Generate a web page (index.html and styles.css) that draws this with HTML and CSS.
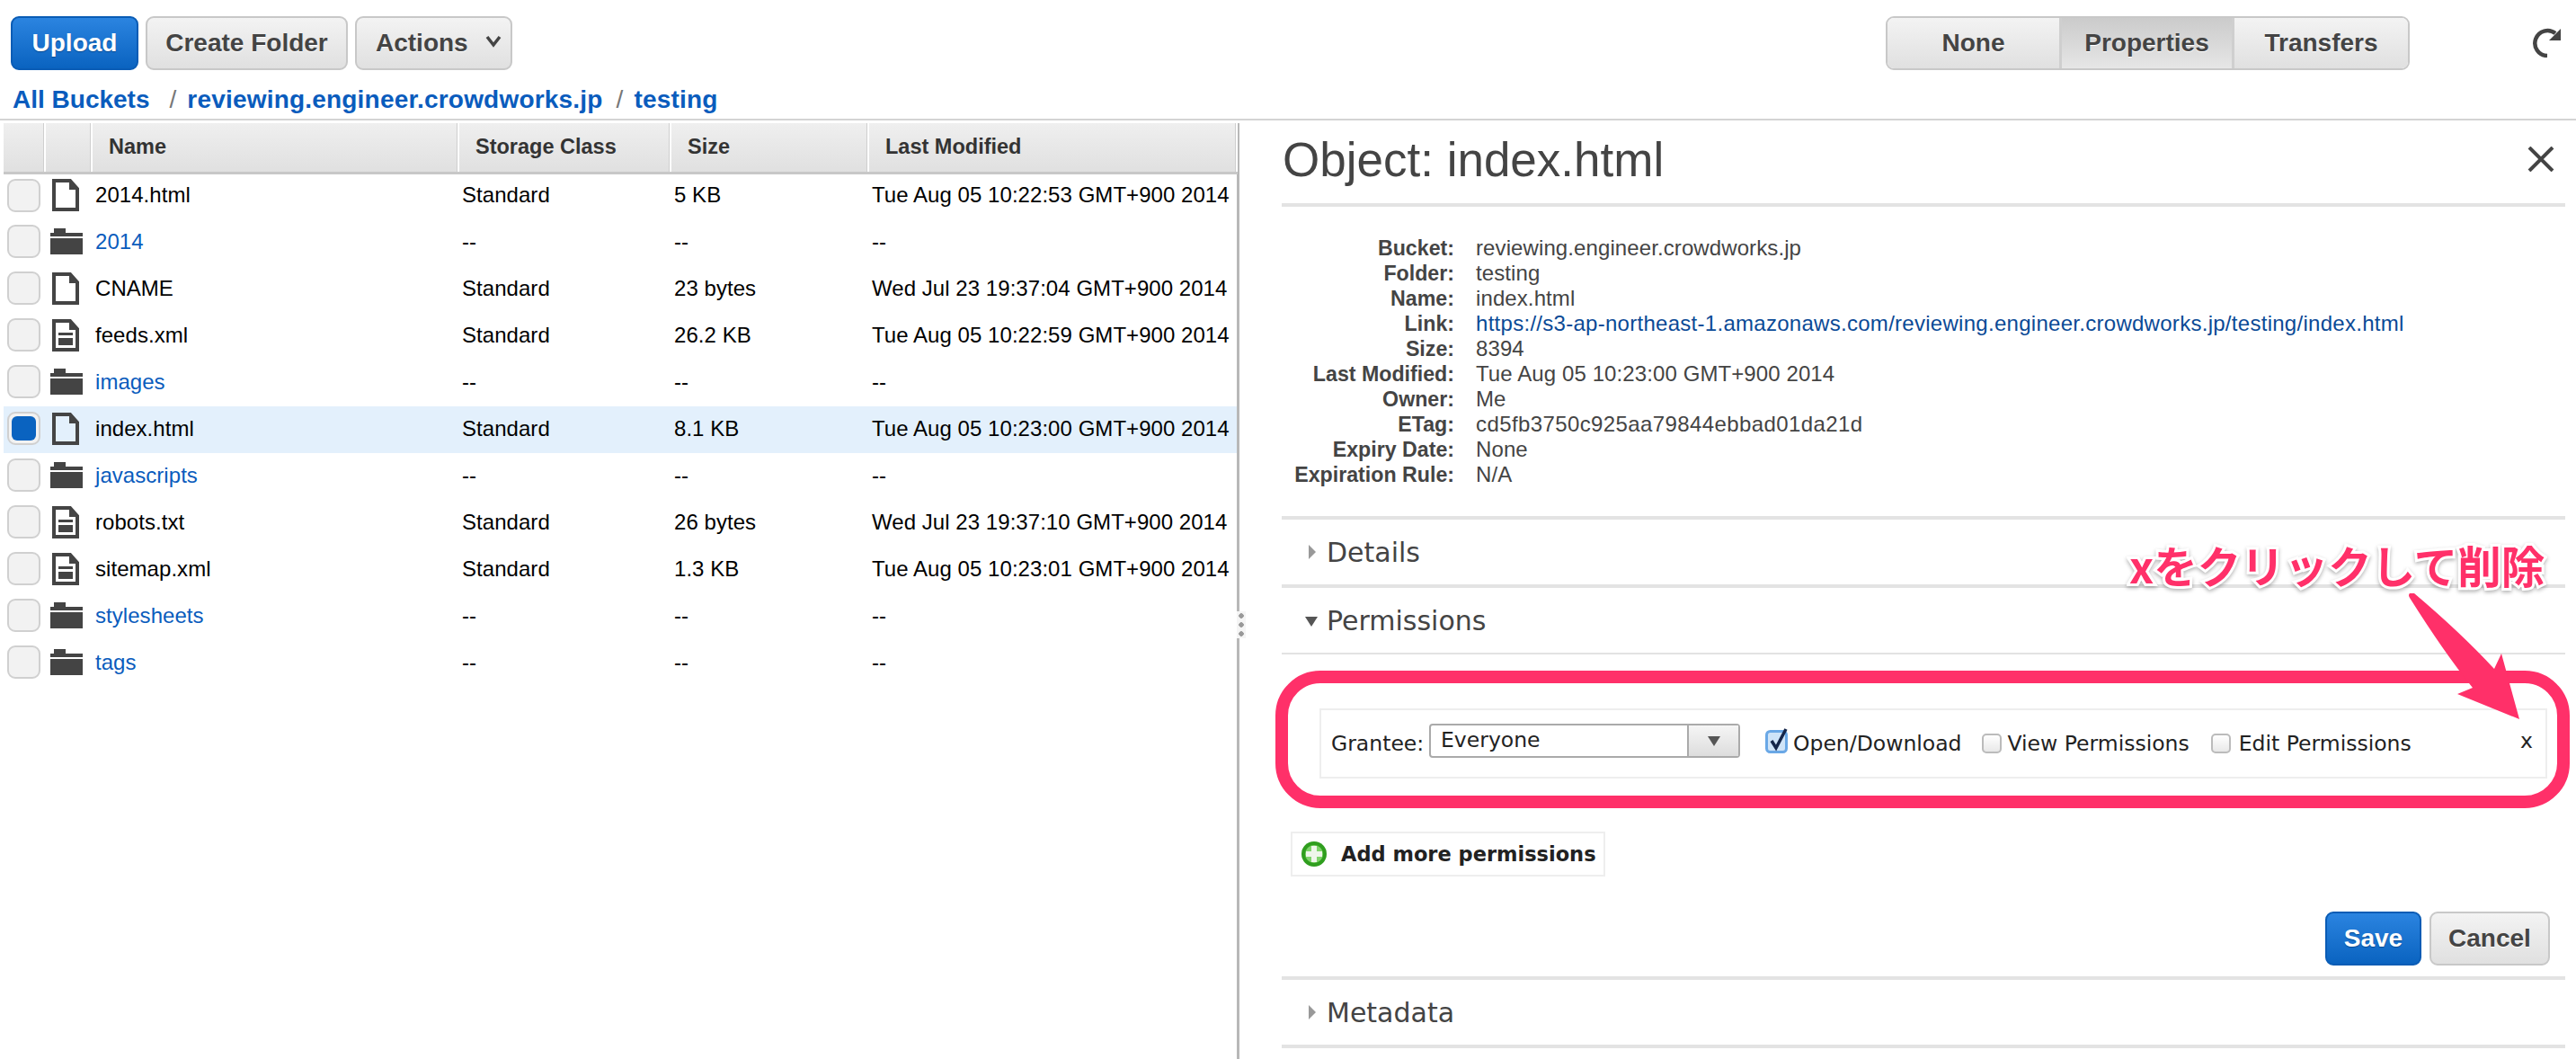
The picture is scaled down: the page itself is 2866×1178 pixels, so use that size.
FILE: index.html
```html
<!DOCTYPE html>
<html lang="ja">
<head>
    <meta charset="UTF-8">
    <meta name="viewport" content="width=device-width, initial-scale=1.0">
    <title>S3 Console - index.html</title>
    <link rel="stylesheet" href="styles.css">
</head>
<body>

    <svg class="icon-defs" width="0" height="0">
        <symbol id="icon-file" viewBox="0 0 30 36">
            <path d="M2 2H20L28 11V34H2Z" fill="none" stroke="#444" stroke-width="4"/>
            <path d="M19 0L30 12H19Z" fill="#444"/>
        </symbol>
        <symbol id="icon-text" viewBox="0 0 30 36">
            <path d="M2 2H20L28 11V34H2Z" fill="none" stroke="#444" stroke-width="4"/>
            <path d="M19 0L30 12H19Z" fill="#444"/>
            <path d="M7 15H23V18H7ZM7 21H23V29H7Z" fill="#444"/>
        </symbol>
        <symbol id="icon-folder" viewBox="0 0 36 29">
            <path d="M4 0H17V5H36V9H0V5H4ZM0 11H36V29H0Z" fill="#444"/>
        </symbol>
    </svg>

    <header class="toolbar">
        <div class="btn-group">
            <button class="btn btn-primary btn-upload">Upload</button>
            <button class="btn btn-create">Create Folder</button>
            <button class="btn btn-actions">Actions
                <svg class="chevron" width="18" height="14" viewBox="0 0 18 14"><path d="M2 2L9 11L16 2" fill="none" stroke="#444" stroke-width="3.5"/></svg>
            </button>
        </div>
        <div class="toolbar-right">
            <div class="segmented">
                <button class="seg seg-none">None</button>
                <button class="seg seg-props active">Properties</button>
                <button class="seg seg-transfers">Transfers</button>
            </div>
            <svg class="refresh" width="36" height="34" viewBox="0 0 36 34">
                <path d="M18 32A14 14 0 1 1 27 7" fill="none" stroke="#444" stroke-width="4.5"/>
                <path d="M20 15L33 2V15Z" fill="#444"/>
            </svg>
        </div>
    </header>

    <nav class="breadcrumb">
        <a href="#" class="crumb-root">All Buckets</a>
        <span class="sep">/</span>
        <a href="#" class="crumb">reviewing.engineer.crowdworks.jp</a>
        <span class="sep">/</span>
        <a href="#" class="crumb">testing</a>
    </nav>

    <main class="split">
        <section class="file-pane">
            <table class="file-table">
                <colgroup>
                    <col class="col-check"><col class="col-icon"><col class="col-name"><col class="col-class"><col class="col-size"><col class="col-date">
                </colgroup>
                <thead>
                    <tr><th></th><th></th><th>Name</th><th>Storage Class</th><th>Size</th><th>Last Modified</th></tr>
                </thead>
                <tbody>
                    <tr><td><span class="check"></span></td><td><svg class="i-file"><use href="#icon-file"/></svg></td><td>2014.html</td><td>Standard</td><td>5 KB</td><td>Tue Aug 05 10:22:53 GMT+900 2014</td></tr>
                    <tr><td><span class="check"></span></td><td><svg class="i-folder"><use href="#icon-folder"/></svg></td><td><a href="#">2014</a></td><td>--</td><td>--</td><td>--</td></tr>
                    <tr><td><span class="check"></span></td><td><svg class="i-file"><use href="#icon-file"/></svg></td><td>CNAME</td><td>Standard</td><td>23 bytes</td><td>Wed Jul 23 19:37:04 GMT+900 2014</td></tr>
                    <tr><td><span class="check"></span></td><td><svg class="i-file"><use href="#icon-text"/></svg></td><td>feeds.xml</td><td>Standard</td><td>26.2 KB</td><td>Tue Aug 05 10:22:59 GMT+900 2014</td></tr>
                    <tr><td><span class="check"></span></td><td><svg class="i-folder"><use href="#icon-folder"/></svg></td><td><a href="#">images</a></td><td>--</td><td>--</td><td>--</td></tr>
                    <tr class="selected"><td><span class="check checked"></span></td><td><svg class="i-file"><use href="#icon-file"/></svg></td><td>index.html</td><td>Standard</td><td>8.1 KB</td><td>Tue Aug 05 10:23:00 GMT+900 2014</td></tr>
                    <tr><td><span class="check"></span></td><td><svg class="i-folder"><use href="#icon-folder"/></svg></td><td><a href="#">javascripts</a></td><td>--</td><td>--</td><td>--</td></tr>
                    <tr><td><span class="check"></span></td><td><svg class="i-file"><use href="#icon-text"/></svg></td><td>robots.txt</td><td>Standard</td><td>26 bytes</td><td>Wed Jul 23 19:37:10 GMT+900 2014</td></tr>
                    <tr><td><span class="check"></span></td><td><svg class="i-file"><use href="#icon-text"/></svg></td><td>sitemap.xml</td><td>Standard</td><td>1.3 KB</td><td>Tue Aug 05 10:23:01 GMT+900 2014</td></tr>
                    <tr><td><span class="check"></span></td><td><svg class="i-folder"><use href="#icon-folder"/></svg></td><td><a href="#">stylesheets</a></td><td>--</td><td>--</td><td>--</td></tr>
                    <tr><td><span class="check"></span></td><td><svg class="i-folder"><use href="#icon-folder"/></svg></td><td><a href="#">tags</a></td><td>--</td><td>--</td><td>--</td></tr>
                </tbody>
            </table>
            <span class="pane-handle"></span>
        </section>

        <section class="props-pane">
            <div class="props-title">
                <h1>Object: index.html</h1>
                <svg class="close" width="30" height="28" viewBox="0 0 30 28"><path d="M2 1L28 27M28 1L2 27" fill="none" stroke="#444" stroke-width="4"/></svg>
            </div>

            <dl class="meta">
                <dt>Bucket:</dt><dd>reviewing.engineer.crowdworks.jp</dd>
                <dt>Folder:</dt><dd>testing</dd>
                <dt>Name:</dt><dd>index.html</dd>
                <dt>Link:</dt><dd><a href="#">https://s3-ap-northeast-1.amazonaws.com/reviewing.engineer.crowdworks.jp/testing/index.html</a></dd>
                <dt>Size:</dt><dd>8394</dd>
                <dt>Last Modified:</dt><dd>Tue Aug 05 10:23:00 GMT+900 2014</dd>
                <dt>Owner:</dt><dd>Me</dd>
                <dt>ETag:</dt><dd class="etag">cd5fb3750c925aa79844ebbad01da21d</dd>
                <dt>Expiry Date:</dt><dd>None</dd>
                <dt>Expiration Rule:</dt><dd>N/A</dd>
            </dl>

            <h2 class="section-head"><span class="tri-right"></span>Details</h2>
            <h2 class="section-head head-open"><span class="tri-down"></span>Permissions</h2>

            <div class="perm-body">
                <div class="grantee-row">
                    <label class="grantee-label">Grantee:</label>
                    <div class="select">
                        <span class="select-value">Everyone</span>
                        <span class="select-arrow"><span class="tri-small"></span></span>
                    </div>
                    <label class="opt opt-open">
                        <svg class="box-on" width="26" height="30" viewBox="0 0 26 30">
                            <rect x="1.5" y="4.5" width="22" height="23" rx="4" fill="#cfe4f8" stroke="#6aa8e6" stroke-width="3"/>
                            <path d="M7 15L12 23L23 2" fill="none" stroke="#14264a" stroke-width="3.5"/>
                        </svg>Open/Download</label>
                    <label class="opt opt-view"><span class="box"></span>View Permissions</label>
                    <label class="opt opt-edit"><span class="box"></span>Edit Permissions</label>
                    <span class="remove">x</span>
                </div>
                <button class="add-perm">
                    <svg width="28" height="28" viewBox="0 0 28 28">
                        <circle cx="14" cy="14" r="14" fill="#2f9e1e"/>
                        <circle cx="14" cy="14" r="10" fill="#7ed36a"/>
                        <path d="M11 5H17V11H23V17H17V23H11V17H5V11H11Z" fill="#eef6ea"/>
                    </svg>Add more permissions</button>
                <div class="form-actions">
                    <button class="btn btn-primary btn-save">Save</button>
                    <button class="btn btn-cancel">Cancel</button>
                </div>
            </div>

            <h2 class="section-head head-meta"><span class="tri-right"></span>Metadata</h2>
        </section>
    </main>

    <!-- 注釈 -->
    <div class="note-frame"></div>
    <div class="note-text">xをクリックして削除</div>
    <svg class="note-arrow" width="140" height="150" viewBox="0 0 140 150">
        <path d="M3 1Q1 3 3 6Q42 68 73 106L56 113L125 141L105 68L97 85Q60 45 8 1Z" fill="#ff3069"/>
    </svg>

</body>
</html>
```

FILE: styles.css
```css
html, body {
    height: 100%;
}
body {
    margin: 0;
    background-color: #fff;
    color: #000;
    font-family: "Liberation Sans", Arial, sans-serif;
    font-size: 24px;
    overflow: hidden;
    display: flex;
    flex-direction: column;
}
a {
    color: #0a5cbd;
    text-decoration: none;
}
.icon-defs {
    display: block;
    height: 0;
}

/* toolbar */
.toolbar {
    display: flex;
    justify-content: space-between;
    align-items: flex-start;
    padding: 18px 14px 0 12px;
    height: 60px;
    flex-shrink: 0;
}
.btn-group {
    display: flex;
    gap: 8px;
}
.btn {
    height: 60px;
    border: 2px solid #c8c8c8;
    border-radius: 9px;
    background: linear-gradient(#f3f3f3, #e0e0e0);
    color: #444;
    font-family: "Liberation Sans", Arial, sans-serif;
    font-size: 28px;
    font-weight: bold;
    padding: 0;
    text-shadow: 0 1px 0 #fff;
}
.btn-primary {
    border-color: #0a5cb5;
    background: linear-gradient(#2b84e0, #0a63c0);
    color: #fff;
    text-shadow: 0 1px 1px #0a4a90;
}
.btn-upload { width: 142px; }
.btn-create { width: 225px; }
.btn-actions {
    width: 175px;
    display: flex;
    align-items: center;
    padding-left: 21px;
}
.chevron {
    margin-left: 19px;
    margin-top: -4px;
}
.toolbar-right {
    display: flex;
    align-items: center;
    gap: 135px;
}
.segmented {
    display: flex;
    height: 60px;
    width: 583px;
    box-sizing: border-box;
    border: 2px solid #c8c8c8;
    border-radius: 9px;
    overflow: hidden;
}
.seg {
    border: 0;
    background: linear-gradient(#f3f3f3, #e0e0e0);
    color: #444;
    font-family: "Liberation Sans", Arial, sans-serif;
    font-size: 28px;
    font-weight: bold;
    padding: 0;
    text-shadow: 0 1px 0 #fff;
}
.seg-none { width: 191px; }
.seg-props {
    width: 195px;
    border-left: 3px solid #cfcfcf;
    border-right: 3px solid #cfcfcf;
}
.seg-transfers { flex-grow: 1; }
.seg.active {
    background: linear-gradient(#cbcbcb, #e6e6e6);
}
.refresh {
    margin-top: -2px;
}

/* breadcrumb */
.breadcrumb {
    display: flex;
    align-items: center;
    height: 43px;
    padding: 11px 0 0 14px;
    border-bottom: 2px solid #d4d4d4;
    font-size: 28px;
    font-weight: bold;
    flex-shrink: 0;
}
.breadcrumb .sep {
    color: #777;
    font-weight: normal;
    margin: 0 12px 0 15px;
}
.crumb-root {
    margin-right: 7px;
}
.crumb {
    letter-spacing: 0.2px;
}

/* split */
.split {
    flex-grow: 1;
    display: flex;
    min-height: 0;
    padding-top: 3px;
}
.file-pane {
    width: 1379px;
    flex-shrink: 0;
    box-sizing: border-box;
    padding-left: 4px;
    border-right: 3px solid #b8b8b8;
    position: relative;
}
.pane-handle {
    position: absolute;
    left: 100%;
    top: 543px;
    width: 10px;
    height: 30px;
    background-color: #f5f5f5;
    background-image: radial-gradient(circle, #999 2.5px, transparent 3px);
    background-size: 10px 10px;
}

/* file table */
.file-table {
    width: 1372px;
    table-layout: fixed;
    border-collapse: collapse;
}
.col-check { width: 46px; }
.col-icon { width: 52px; }
.col-name { width: 408px; }
.col-class { width: 236px; }
.col-size { width: 220px; }
.col-date { width: 410px; }
.file-table th {
    height: 55px;
    box-sizing: border-box;
    padding: 0 0 0 18px;
    text-align: left;
    font-size: 23.5px;
    color: #333;
    background: linear-gradient(#efefef, #e0e0e0);
    border-right: 2px solid #fff;
    border-bottom: 3px solid #c8c8c8;
    box-shadow: inset -1px 0 0 #cfcfcf;
}
.file-table td {
    height: 52px;
    box-sizing: border-box;
    padding: 0 0 3px 4px;
    white-space: nowrap;
    letter-spacing: 0.05px;
}
.file-table td:first-child,
.file-table td:nth-child(2) {
    padding: 0 0 3px;
    line-height: 0;
}
.selected td {
    background-color: #e3f0fc;
}
.check {
    display: block;
    width: 37px;
    height: 37px;
    margin-left: 4px;
    box-sizing: border-box;
    border: 2px solid #d0d0d0;
    border-radius: 9px;
    background-color: #f2f2f2;
    position: relative;
}
.check.checked::after {
    content: "";
    position: absolute;
    left: 3px;
    top: 3px;
    width: 27px;
    height: 27px;
    border-radius: 6px;
    background-color: #0a63c0;
}
.i-file {
    width: 30px;
    height: 36px;
    margin-left: 8px;
}
.i-folder {
    width: 36px;
    height: 29px;
    margin-left: 6px;
}

/* properties */
.props-pane {
    flex-grow: 1;
    min-width: 0;
    padding: 0 12px 0 47px;
}
.props-title {
    display: flex;
    justify-content: space-between;
    align-items: center;
    height: 86px;
    margin-top: -3px;
    padding: 0 12px 6px 0;
    border-bottom: 4px solid #e3e3e3;
}
.props-title h1 {
    margin: 0 0 0 1px;
    font-size: 53px;
    font-weight: normal;
    color: #444;
}
.meta {
    display: grid;
    grid-template-columns: 192px 1fr;
    grid-auto-rows: 28px;
    column-gap: 24px;
    margin: 0;
    padding: 32px 0;
    height: 280px;
    line-height: 28px;
    color: #444;
    border-bottom: 4px solid #e3e3e3;
}
.meta dt {
    text-align: right;
    font-size: 23.2px;
    font-weight: bold;
}
.meta dd {
    margin: 0;
    white-space: nowrap;
    letter-spacing: 0.1px;
}
.meta a {
    color: #0b4a96;
    letter-spacing: 0.28px;
}
.meta .etag {
    letter-spacing: 0.4px;
}
.section-head {
    display: flex;
    align-items: center;
    height: 72px;
    margin: 0;
    padding-left: 50px;
    position: relative;
    font-family: "DejaVu Sans", sans-serif;
    font-size: 30px;
    font-weight: normal;
    color: #444;
    border-bottom: 4px solid #e3e3e3;
}
.head-open {
    border-bottom-width: 2px;
}
.head-meta {
    border-top: 4px solid #e3e3e3;
}
.tri-right {
    position: absolute;
    left: 30px;
    top: 28px;
    border-left: 8px solid #999;
    border-top: 8px solid transparent;
    border-bottom: 8px solid transparent;
}
.head-meta .tri-right {
    top: 28px;
}
.tri-down {
    position: absolute;
    left: 26px;
    top: 32px;
    border-top: 11px solid #555;
    border-left: 7px solid transparent;
    border-right: 7px solid transparent;
}
.perm-body {
    height: 358px;
    position: relative;
    display: flex;
    flex-direction: column;
    font-family: "DejaVu Sans", sans-serif;
}
.grantee-row {
    display: flex;
    align-items: center;
    height: 78px;
    width: 1366px;
    box-sizing: border-box;
    margin: 60px 0 0 42px;
    padding-left: 11px;
    border: 2px solid #eee;
    font-size: 23.5px;
    color: #222;
}
.grantee-label {
    width: 109px;
}
.select {
    display: flex;
    width: 346px;
    height: 38px;
    box-sizing: border-box;
    margin-top: -6px;
    border: 2px solid #aaa;
    border-radius: 4px;
    background-color: #fff;
}
.select-value {
    flex-grow: 1;
    padding-left: 11px;
    line-height: 32px;
}
.select-arrow {
    width: 55px;
    display: flex;
    align-items: center;
    justify-content: center;
    border-left: 2px solid #aaa;
    background: linear-gradient(#f5f5f5, #ddd);
}
.tri-small {
    border-top: 11px solid #555;
    border-left: 7px solid transparent;
    border-right: 7px solid transparent;
}
.opt {
    display: flex;
    align-items: center;
}
.opt-open {
    margin-left: 28px;
}
.box-on {
    margin: -6px 5px 0 0;
}
.box {
    width: 22px;
    height: 22px;
    box-sizing: border-box;
    border: 2px solid #bbb;
    border-radius: 5px;
    background: linear-gradient(#fff, #e8e8e8);
    margin-right: 7px;
}
.opt-view {
    margin-left: 22px;
}
.opt-edit {
    margin-left: 24px;
}
.opt-edit .box {
    margin-right: 9px;
}
.remove {
    margin: -6px 14px 0 auto;
}
.add-perm {
    display: flex;
    align-items: center;
    gap: 16px;
    align-self: flex-start;
    width: 350px;
    height: 50px;
    box-sizing: border-box;
    margin: 59px 0 0 10px;
    padding: 0 0 0 10px;
    border: 2px solid #eee;
    background-color: #fff;
    font-family: "DejaVu Sans", sans-serif;
    font-size: 22.5px;
    font-weight: bold;
    color: #222;
    white-space: nowrap;
}
.form-actions {
    display: flex;
    justify-content: flex-end;
    gap: 9px;
    margin: 39px 17px 0 0;
}
.btn-save { width: 107px; }
.btn-cancel { width: 134px; }

/* annotation overlay */
.note-frame {
    position: absolute;
    left: 1419px;
    top: 746px;
    width: 1440px;
    height: 153px;
    box-sizing: border-box;
    border: 14px solid #ff3069;
    border-radius: 50px;
}
.note-text {
    position: absolute;
    left: 2369px;
    top: 590px;
    font-family: "Noto Sans CJK JP", sans-serif;
    font-size: 48.5px;
    font-weight: bold;
    line-height: 76px;
    color: #ff3069;
    white-space: nowrap;
    -webkit-text-stroke: 6px #fff;
    paint-order: stroke fill;
    filter: drop-shadow(0 2px 2px rgba(0, 0, 0, 0.3));
}
.note-arrow {
    position: absolute;
    left: 2678px;
    top: 659px;
}
```
